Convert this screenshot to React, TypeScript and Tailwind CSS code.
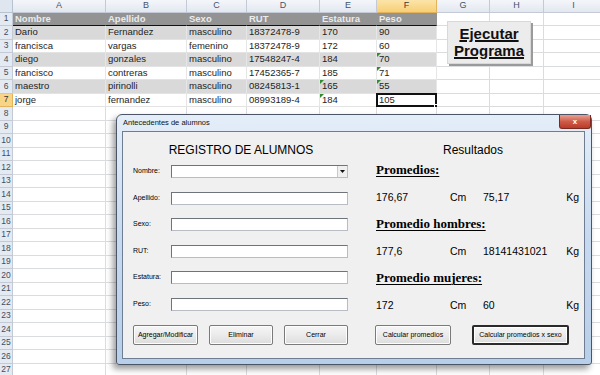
import clsx from 'clsx';

const cols = [
  { l: 'A', w: 93 },
  { l: 'B', w: 81 },
  { l: 'C', w: 60 },
  { l: 'D', w: 73 },
  { l: 'E', w: 57 },
  { l: 'F', w: 60 },
  { l: 'G', w: 53 },
  { l: 'H', w: 54 },
  { l: 'I', w: 60 },
];

const data = [
  ['Nombre', 'Apellido', 'Sexo', 'RUT', 'Estatura', 'Peso'],
  ['Dario', 'Fernandez', 'masculino', '18372478-9', '170', '90'],
  ['francisca', 'vargas', 'femenino', '18372478-9', '172', '60'],
  ['diego', 'gonzales', 'masculino', '17548247-4', '184', '70'],
  ['francisco', 'contreras', 'masculino', '17452365-7', '185', '71'],
  ['maestro', 'pirinolli', 'masculino', '08245813-1', '165', '55'],
  ['jorge', 'fernandez', 'masculino', '08993189-4', '184', '105'],
];

// cells with the little green "number stored as text" marker (row-col)
const flagged = ['6-4', '7-4', '4-5', '5-5', '6-5'];

const rows = Array.from({ length: 27 }, (_, i) => i + 1);

const Sheet = () => {
  return (
    <div className="flex flex-col font-['Liberation_Sans',Arial,sans-serif] text-[9.5px] text-[#1e1e1e]">
      <div className="flex h-[12.5px] shrink-0">
        <div className="w-[13px] shrink-0 border-r border-b border-[#b7c2d1] bg-[#dfe6f0]" />
        {cols.map((c, ci) => (
          <div
            key={c.l}
            style={{ width: c.w }}
            className={clsx(
              'flex shrink-0 items-center justify-center border-r border-b text-[9px]',
              ci === 5
                ? 'border-[#e2b35a] bg-gradient-to-b from-[#fbe4a8] to-[#f7cf76] text-[#3a3a3a]'
                : 'border-[#c3cad6] bg-gradient-to-b from-[#f4f6fa] to-[#e2e8f0] text-[#43536a]'
            )}
          >
            {c.l}
          </div>
        ))}
      </div>
      {rows.map((r) => (
        <div key={r} className="flex h-[13.5px] shrink-0">
          <div
            className={clsx(
              'flex w-[13px] shrink-0 items-center justify-center border-r border-b text-[8.5px]',
              r === 7
                ? 'border-[#e2b35a] bg-[#f8d486] text-[#333]'
                : 'border-[#c3cad6] bg-[#e4eaf2] text-[#3f4d60]'
            )}
          >
            {r}
          </div>
          {cols.map((c, ci) => {
            const inTable = r <= 7 && ci < 6;
            const text = inTable ? data[r - 1][ci] : '';
            return (
              <div
                key={c.l}
                style={{ width: c.w }}
                className={clsx(
                  'relative flex shrink-0 items-center whitespace-nowrap border-r border-b pl-[2px]',
                  !inTable && 'border-[#dadcdf] bg-white',
                  inTable && r === 1 && 'border-r-[#939393] bg-[#939393] font-bold text-[#ebebeb]',
                  inTable && r > 1 && r % 2 === 0 && 'border-r-[#e6e6e6] bg-[#d9d9d9]',
                  inTable && r > 1 && r % 2 === 1 && 'border-r-[#e6e6e6] bg-white',
                  inTable && r > 1 && 'border-b-[#e3e3e3]',
                  inTable && (r === 1 || r === 7) && 'border-b-[#111]'
                )}
              >
                {text}
                {flagged.includes(`${r}-${ci}`) && (
                  <span className="absolute left-0 top-0 h-0 w-0 border-t-[4px] border-r-[4px] border-t-[#2e8b2e] border-r-transparent" />
                )}
                {r === 7 && ci === 5 && (
                  <span className="absolute inset-[-1px] border-2 border-[#111]">
                    <span className="absolute right-[-3px] bottom-[-3px] h-[4px] w-[4px] border border-white bg-[#111]" />
                  </span>
                )}
              </div>
            );
          })}
        </div>
      ))}
    </div>
  );
};

const Btn = ({ label, w, main }: { label: string; w: string; main?: boolean }) => (
  <div
    className={clsx(
      'flex h-[20px] shrink-0 items-center justify-center rounded-[2px] bg-gradient-to-b from-[#f6f6f6] via-[#ebebeb] to-[#dcdcdc] text-[7px]',
      w,
      main ? 'border-2 border-[#2b2b2b] shadow-[inset_0_0_0_1px_#fff]' : 'border border-[#7a7a7a] shadow-[inset_0_0_0_1px_#fdfdfd]'
    )}
  >
    {label}
  </div>
);

const Field = ({ label, combo }: { label: string; combo?: boolean }) => (
  <div className="flex h-[13px] items-center">
    <span className="w-[38px] shrink-0 text-[7px]">{label}</span>
    <div className="relative flex h-[13px] w-[177px] items-center justify-end border border-[#b8bcc4] border-t-[#6f737a] border-l-[#6f737a] bg-white">
      {combo && (
        <div className="flex h-[11px] w-[10px] items-center justify-center border-l border-[#c9c9c9] bg-[#f0f0f0]">
          <svg width="5" height="3" viewBox="0 0 5 3">
            <path d="M0 0h5L2.5 3z" fill="#111" />
          </svg>
        </div>
      )}
    </div>
  </div>
);

const ResultRow = ({ a, b }: { a: string; b: string }) => (
  <div className="grid h-[14px] grid-cols-[75px_33px_1fr_auto] items-center text-[10.5px]">
    <span className="pl-[1px]">{a}</span>
    <span>Cm</span>
    <span>{b}</span>
    <span>Kg</span>
  </div>
);

const Heading = ({ children }: { children: string }) => (
  <div className="flex h-[14px] items-center pl-[1px] font-['Liberation_Serif','Times_New_Roman',serif] text-[13px] font-bold underline decoration-[1px] underline-offset-[2px]">
    {children}
  </div>
);

const Dialog = () => (
  <div className="absolute left-[116px] top-[114px] flex h-[251px] w-[476px] flex-col rounded-t-[6px] rounded-b-[3px] border border-[#4b5566] bg-gradient-to-b from-[#e4eef9] via-[#c6d9ef] to-[#b8cfe9] pr-[6px] pb-[5px] pl-[5px] font-['Liberation_Sans',Arial,sans-serif] text-black shadow-[-3px_4px_6px_rgba(0,0,0,0.4)]">
    <div className="relative flex h-[16px] shrink-0 items-center">
      <span className="pl-[1px] text-[7.5px] text-[#111]">Antecedentes de alumnos</span>
      <div className="absolute top-0 right-[-6px] flex h-[14px] w-[32px] items-center justify-center rounded-b-[3px] border border-t-0 border-[#7b2a22] bg-gradient-to-b from-[#e8a093] via-[#cf5a48] to-[#b93b28] text-[8px] font-bold text-white">
        x
      </div>
    </div>
    <div className="flex flex-1 border border-[#6e7d92] bg-[#f0f0f0]">
      <div className="flex w-[226px] flex-col pt-[11px] pl-[10px]">
        <div className="flex h-[14px] items-center justify-center text-[12px] leading-none">
          REGISTRO DE ALUMNOS
        </div>
        <div className="mt-[8px] flex flex-col gap-[13.5px]">
          <Field label="Nombre:" combo />
          <Field label="Apellido:" />
          <Field label="Sexo:" />
          <Field label="RUT:" />
          <Field label="Estatura:" />
          <Field label="Peso:" />
        </div>
        <div className="mt-[14.5px] flex gap-[11px]">
          <Btn label="Agregar/Modificar" w="w-[65px]" />
          <Btn label="Eliminar" w="w-[64px]" />
          <Btn label="Cerrar" w="w-[64px]" />
        </div>
      </div>
      <div className="ml-[26px] flex w-[204px] flex-col pt-[11px]">
        <div className="flex h-[14px] items-center justify-center pr-[8px] text-[12px] leading-none">
          Resultados
        </div>
        <div className="mt-[6px] flex flex-col gap-[13px]">
          <Heading>Promedios:</Heading>
          <ResultRow a="176,67" b="75,17" />
          <Heading>Promedio hombres:</Heading>
          <ResultRow a="177,6" b="18141431021" />
          <Heading>Promedio mujeres:</Heading>
          <ResultRow a="172" b="60" />
        </div>
        <div className="mt-[13px] flex gap-[21px]">
          <Btn label="Calcular promedios" w="w-[76px]" />
          <Btn label="Calcular promedios x sexo" w="w-[97px]" main />
        </div>
      </div>
    </div>
  </div>
);

export default function App() {
  return (
    <div className="relative h-[375px] w-[600px] overflow-hidden bg-white">
      <Sheet />
      <div className="absolute left-[447px] top-[21px] flex h-[43px] w-[84px] flex-col items-center justify-center gap-[1px] border border-[#d8d8d8] bg-[#ececec] font-['Liberation_Sans',Arial,sans-serif] text-[15px] leading-[16px] font-bold text-[#111] shadow-[2px_2px_0_#9a9a9a]">
        <span className="underline decoration-[1.5px] underline-offset-[1px]">Ejecutar</span>
        <span className="underline decoration-[1.5px] underline-offset-[1px]">Programa</span>
      </div>
      <Dialog />
    </div>
  );
}
